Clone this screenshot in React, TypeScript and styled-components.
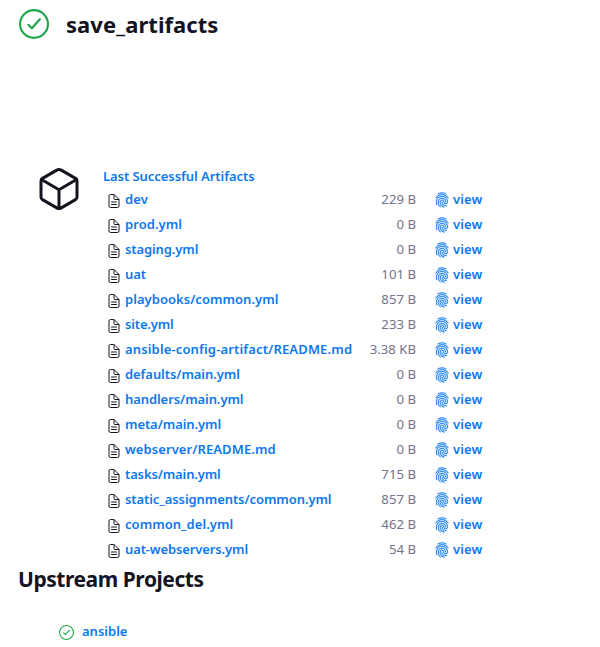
import React from "react";
import styled, { createGlobalStyle } from "styled-components";
import { IoCubeOutline, IoDocumentTextOutline, IoFingerPrintOutline } from "react-icons/io5";

const GlobalStyle = createGlobalStyle`
  * { box-sizing: border-box; }
  body {
    margin: 0;
    background: #fff;
    color: #14141f;
    font-family: "Noto Sans", "Open Sans", sans-serif;
    font-size: 13px;
  }
`;

const Page = styled.main`
  height: 647px;
  overflow: hidden;
  padding: 9px 18px 0;
`;

const Header = styled.header`
  display: flex;
  align-items: center;
  gap: 17px;
  height: 30px;
  padding-left: 1px;
`;

const Title = styled.h1`
  margin: 0;
  font-size: 22px;
  line-height: 30px;
  font-weight: 700;
  letter-spacing: 0.05px;
`;

const Artifacts = styled.section`
  display: flex;
  gap: 20px;
  margin-top: 125px;
  padding-left: 17px;
`;

const CubeIcon = styled(IoCubeOutline)`
  width: 48px;
  height: 48px;
  margin-top: 1px;
`;

const List = styled.div`
  padding-top: 1px;
`;

const Link = styled.a<{ $spacing?: number }>`
  color: #0a78f0;
  font-weight: 600;
  line-height: 22px;
  white-space: nowrap;
  text-decoration: none;
  letter-spacing: ${(p) => p.$spacing ?? 0}px;
`;

const ListTitle = styled.div`
  height: 22px;
  display: flex;
`;

const Row = styled.div`
  display: grid;
  grid-template-columns: 19px 3px 230px 61px 18px 16px 3px auto;
  height: 25px;
  align-items: center;
`;

const FileIcon = styled(IoDocumentTextOutline)`
  width: 16px;
  height: 16px;
  margin: 3px 0 0 3px;
`;

const FileLink = styled(Link)`
  grid-column: 3;
  margin-bottom: 2px;
`;

const Size = styled.span`
  margin-bottom: 2px;
  color: #73738c;
  font-size: 13.2px;
  text-align: right;
  white-space: nowrap;
`;

const PrintIcon = styled(IoFingerPrintOutline)`
  grid-column: 6;
  width: 16px;
  height: 16px;
  margin-top: 1px;
  color: #0a78f0;
  overflow: visible;

  path {
    stroke: currentColor;
    stroke-width: 8px;
  }
`;

const ViewLink = styled(Link)`
  grid-column: 8;
  margin-bottom: 2px;
`;

const Subtitle = styled.h2`
  margin: 2px 0 0;
  font-size: 21px;
  line-height: 30px;
  font-weight: 700;
  letter-spacing: -0.45px;
`;

const Upstream = styled.div`
  display: flex;
  align-items: center;
  gap: 8.5px;
  margin: 26px 0 0 40.5px;

  svg {
    margin-top: 2px;
  }
`;

const Status = ({ size }: { size: number }) => (
  <svg width={size} height={size} viewBox="32 32 448 448" fill="none" stroke="#1ea64b" strokeWidth="32" strokeLinecap="round" strokeLinejoin="round">
    <circle cx="256" cy="256" r="208" />
    <path d="M344 184L224 320L172 268" />
  </svg>
);

type File = { name: string; size: string; spacing?: number };

const files: File[] = [
  { name: "dev", size: "229 B", spacing: 0.1 },
  { name: "prod.yml", size: "0 B", spacing: 0.06 },
  { name: "staging.yml", size: "0 B", spacing: -0.1 },
  { name: "uat", size: "101 B", spacing: -0.1 },
  { name: "playbooks/common.yml", size: "857 B", spacing: 0.04 },
  { name: "site.yml", size: "233 B", spacing: -0.15 },
  { name: "ansible-config-artifact/README.md", size: "3.38 KB", spacing: 0.15 },
  { name: "defaults/main.yml", size: "0 B", spacing: -0.07 },
  { name: "handlers/main.yml", size: "0 B", spacing: -0.08 },
  { name: "meta/main.yml", size: "0 B", spacing: -0.08 },
  { name: "webserver/README.md", size: "0 B", spacing: 0.08 },
  { name: "tasks/main.yml", size: "715 B", spacing: -0.13 },
  { name: "static_assignments/common.yml", size: "857 B", spacing: -0.08 },
  { name: "common_del.yml", size: "462 B", spacing: 0.04 },
  { name: "uat-webservers.yml", size: "54 B", spacing: -0.12 },
];

export default function App() {
  return (
    <Page>
      <GlobalStyle />
      <Header>
        <Status size={30} />
        <Title>save_artifacts</Title>
      </Header>
      <Artifacts>
        <CubeIcon />
        <List>
          <ListTitle>
            <Link $spacing={-0.05}>Last Successful Artifacts</Link>
          </ListTitle>
          {files.map((f) => (
            <Row key={f.name}>
              <FileIcon />
              <FileLink $spacing={f.spacing}>{f.name}</FileLink>
              <Size>{f.size}</Size>
              <PrintIcon />
              <ViewLink $spacing={0.1}>view</ViewLink>
            </Row>
          ))}
        </List>
      </Artifacts>
      <Subtitle>Upstream Projects</Subtitle>
      <Upstream>
        <Status size={15} />
        <Link>ansible</Link>
      </Upstream>
    </Page>
  );
}
